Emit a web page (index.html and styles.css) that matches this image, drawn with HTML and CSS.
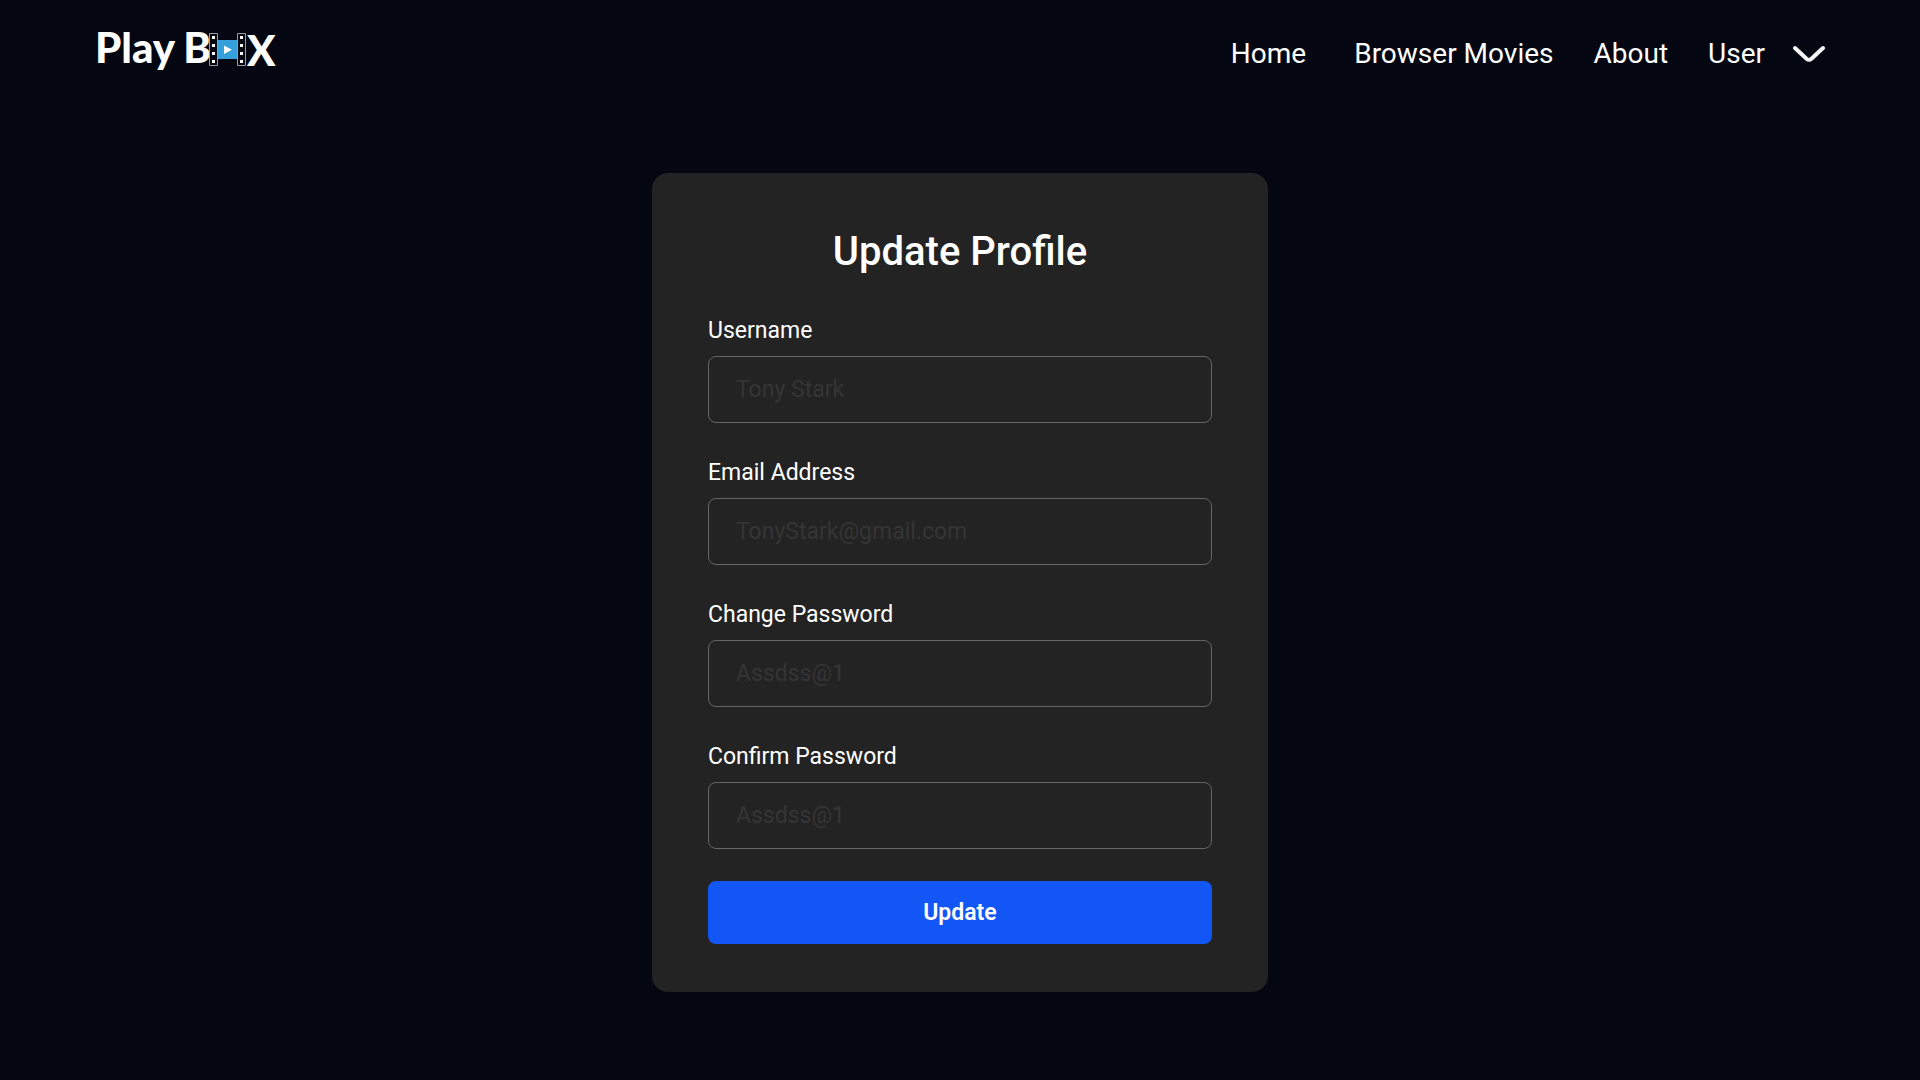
FILE: index.html
```
<!DOCTYPE html>
<html lang="en">
<head>
<meta charset="utf-8">
<meta name="viewport" content="width=device-width, initial-scale=1">
<title>Play Box - Update Profile</title>
<link rel="stylesheet" href="styles.css">
</head>
<body>
<header class="header">
  <a class="logo" href="#" aria-label="Play Box">
    <span class="logo-word">Play</span>
    <span class="logo-word">B</span>
    <svg class="logo-film" width="37" height="34" viewBox="0 0 37 34" aria-hidden="true">
      <g fill="#05070f" stroke="#9a9ca2"><path d="M.5.5h8v32h-8zM28.500.5h8v32h-8z"/></g>
      <path fill="#349fda" d="M9 7h19v19H9z"/>
      <path fill="#fff" d="M15 12.500v8.500l8-4.300z"/>
      <path fill="#fff" d="M3 3h3v3H3zM3 11h3v3H3zM3 19h3v3H3zM3 27h3v3H3zM31 3h3v3h-3zM31 11h3v3h-3zM31 19h3v3h-3zM31 27h3v3h-3z"/>
    </svg>
    <span class="logo-word logo-x">X</span>
  </a>
  <nav class="nav">
    <a class="nav-link nav-home" href="#">Home</a>
    <a class="nav-link" href="#">Browser Movies</a>
    <a class="nav-link" href="#">About</a>
    <button class="user-menu" type="button">User
      <svg width="34" height="18" viewBox="0 0 34 18" aria-hidden="true"><path d="M3 3l11.500 10.800q2.500 2 5 0L31 3" fill="none" stroke="#f5f5f5" stroke-width="4" stroke-linecap="round"/></svg>
    </button>
  </nav>
</header>
<main class="main">
  <form class="card">
    <h1 class="title">Update Profile</h1>
    <div class="fields">
      <div class="field">
        <label class="label" for="username">Username</label>
        <input class="input" id="username" type="text" placeholder="Tony Stark">
      </div>
      <div class="field">
        <label class="label" for="email">Email Address</label>
        <input class="input" id="email" type="email" placeholder="TonyStark@gmail.com">
      </div>
      <div class="field">
        <label class="label" for="password">Change Password</label>
        <input class="input" id="password" type="password" placeholder="Assdss@1">
      </div>
      <div class="field">
        <label class="label" for="confirm">Confirm Password</label>
        <input class="input" id="confirm" type="password" placeholder="Assdss@1">
      </div>
    </div>
    <button class="submit" type="submit">Update</button>
  </form>
</main>
</body>
</html>
```
FILE: styles.css
```
* {
  box-sizing: border-box;
}

body {
  margin: 0;
  min-height: 100vh;
  background: #040711;
  color: #fff;
  font-family: Roboto, "Liberation Sans", sans-serif;
}

.header {
  display: flex;
  align-items: flex-start;
  justify-content: space-between;
  padding: 20px 94px 0 95px;
}

.logo {
  display: flex;
  align-items: flex-start;
  color: #fff;
  text-decoration: none;
}

.logo-word {
  font: 900 42px/54px Lato, sans-serif;
}

.logo-word + .logo-word {
  margin-left: 8px;
}

.logo-film {
  margin: 13px 0 0 -2px;
}

.logo .logo-x {
  margin: 3px 0 0 1px;
}

.nav {
  display: flex;
  gap: 40px;
  padding-top: 17px;
}

.nav-link,
.user-menu {
  color: #fff;
  font: 400 28px/34px Roboto, sans-serif;
  text-decoration: none;
}

.nav-home {
  margin-right: 8px;
}

.user-menu {
  display: flex;
  align-items: center;
  gap: 27px;
  padding: 0;
  border: 0;
  background: none;
}

.main {
  display: flex;
  justify-content: center;
  padding: 96px 24px 88px;
}

.card {
  display: flex;
  flex-direction: column;
  width: 100%;
  max-width: 616px;
  padding: 55px 56px 48px;
  border-radius: 16px;
  background: #232323;
}

.title {
  margin: 0 0 41px;
  font-size: 40px;
  font-weight: 500;
  line-height: 48px;
  text-align: center;
}

.fields {
  display: flex;
  flex-direction: column;
  gap: 36px;
  margin-bottom: 32px;
}

.field {
  display: flex;
  flex-direction: column;
  gap: 11px;
}

.label {
  font-size: 23px;
  line-height: 28px;
}

.input {
  width: 100%;
  height: 67px;
  padding: 0 27px;
  border: 1px solid #666;
  border-radius: 8px;
  background: transparent;
  color: #fff;
  font: 400 23px/28px Roboto, sans-serif;
}

.input::placeholder {
  color: #353535;
  opacity: 1;
}

.submit {
  height: 63px;
  border: 0;
  border-radius: 8px;
  background: #1257f5;
  color: #fff;
  font: 600 23px/28px Roboto, sans-serif;
}
```
